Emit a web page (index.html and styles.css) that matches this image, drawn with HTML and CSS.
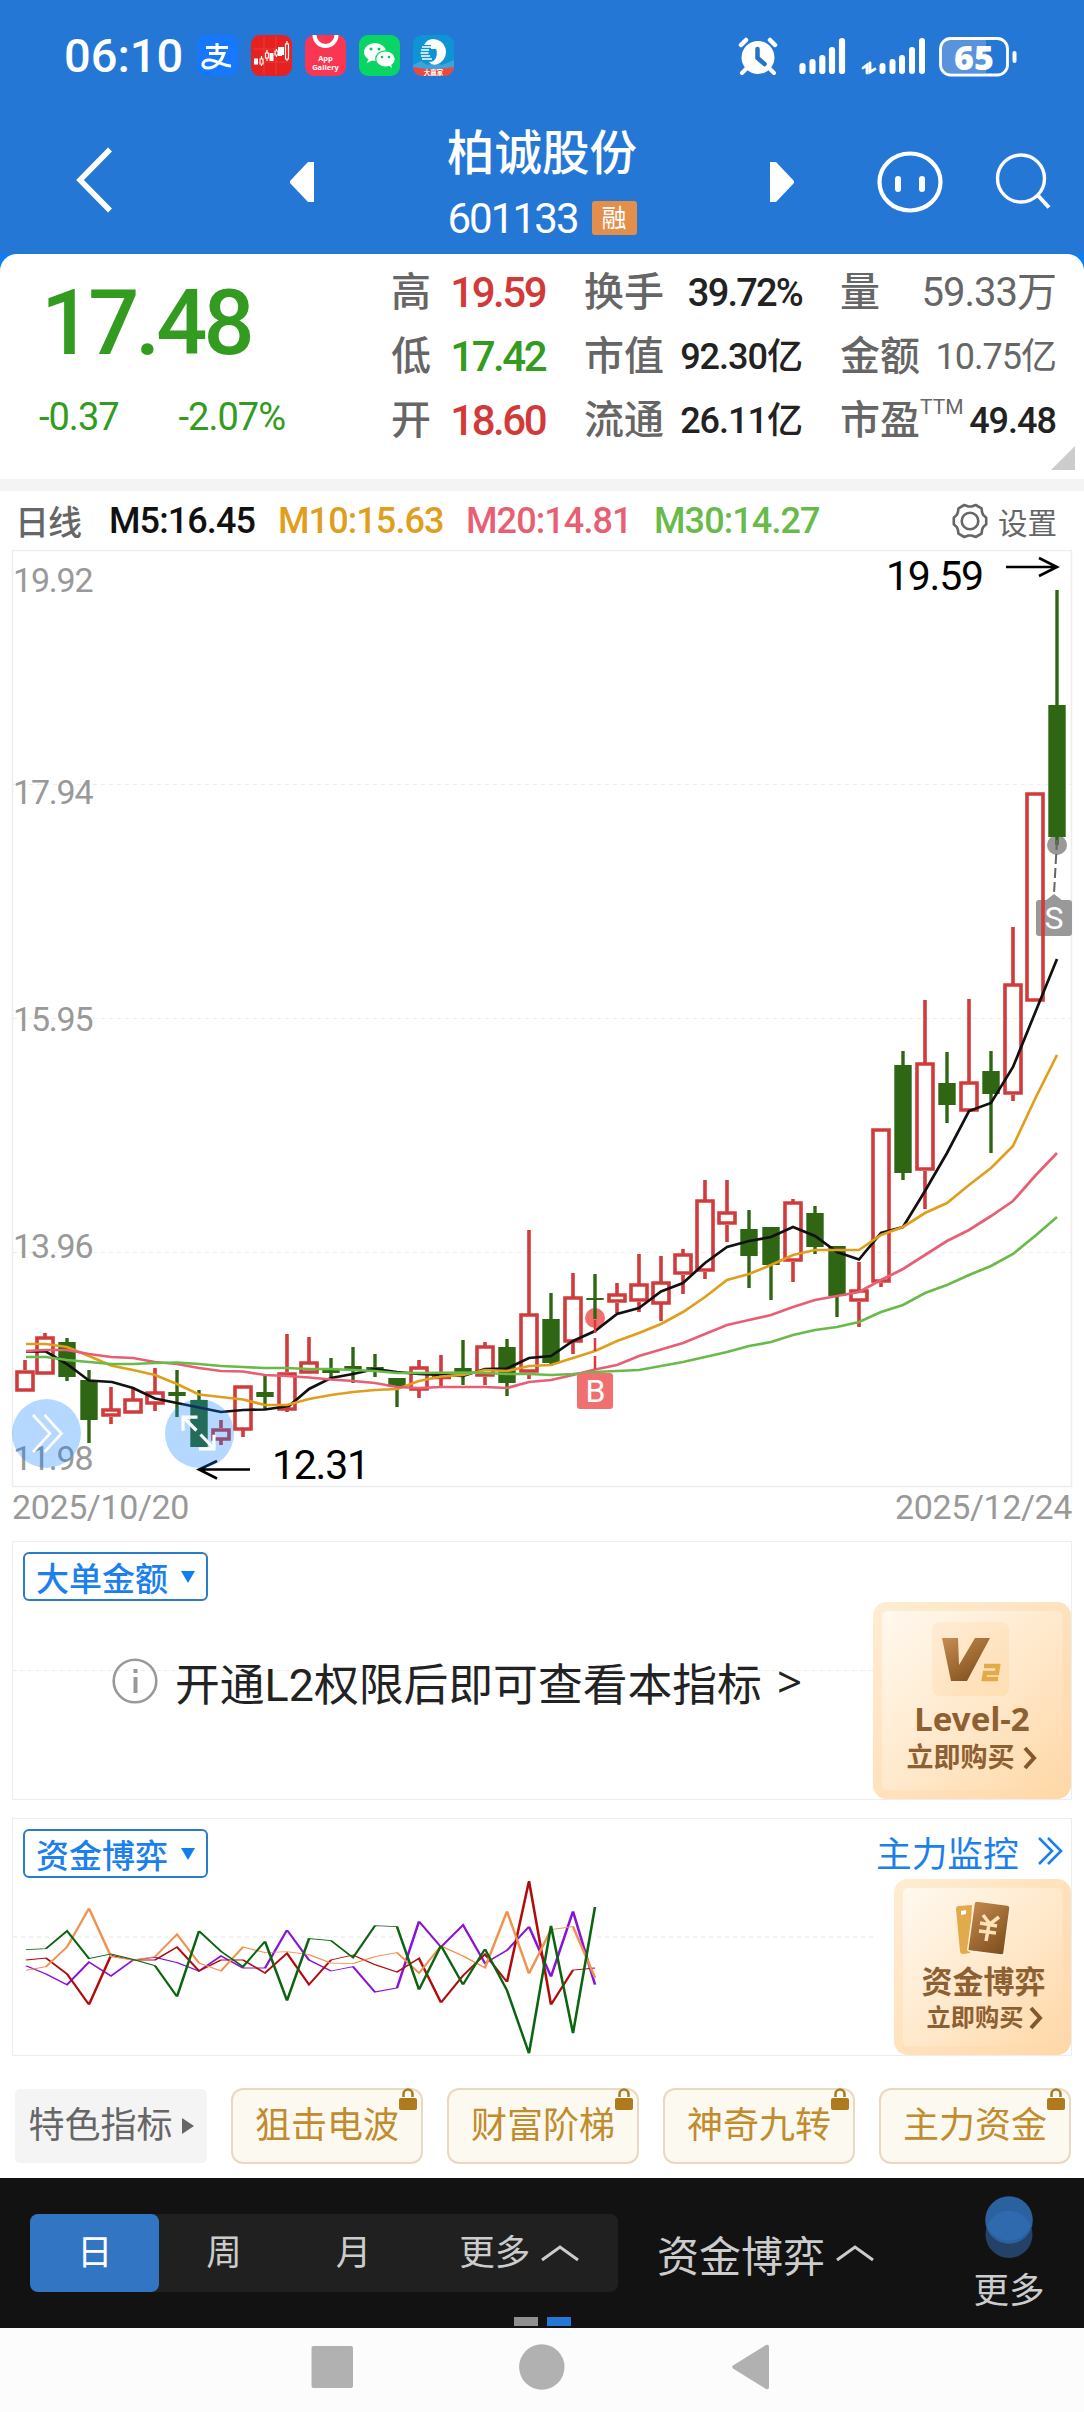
FILE: index.html
```html
<!DOCTYPE html>
<html lang="zh-CN">
<head>
<meta charset="utf-8">
<title>柏诚股份 601133</title>
<link rel="stylesheet" href="styles.css">
</head>
<body>
<header class="header">
  <div class="status">
    <span class="time">06:10</span>
    <div class="apps">
      <svg width="41" height="41" viewBox="0 0 41 41"><rect width="41" height="41" rx="9" fill="#1677ff"/><path d="M9 12.500h22M20 8v9M12 18.500h15C25 25 19 33 11 33c-8 0-6-9 2-8 8 1 14 6 21 6" fill="none" stroke="#fff" stroke-width="3"/></svg>
      <svg width="41" height="41" viewBox="0 0 41 41"><rect width="41" height="41" rx="9" fill="#e52221"/><path d="M13 1v39M25 1v39M2 14h37M2 27h37" stroke="#f04a42" stroke-width=".6"/><path d="M5 23.500v6M20.500 18v8M29 12v9M31 12v8" stroke="#fff" stroke-width="4"/><path d="M9 24h3v5h-3zM10.500 21v3m0 5v2M14.500 18h3v5h-3zM16 15v3m0 5v3M24 16h3v4h-3zM25.500 14v2m0 4v2M34.500 9h3v15h-3zM36 6v3m0 15v2" fill="none" stroke="#fff" stroke-width="1.200"/></svg>
      <svg width="41" height="41" viewBox="0 0 41 41"><rect width="41" height="41" rx="9" fill="#fb3653"/><path d="M9.500 0a11 11 0 0 0 22 0" fill="none" stroke="#fff" stroke-width="4"/><text class="app-word" x="20.500" y="26">App</text><text class="app-word" x="20.500" y="35">Gallery</text></svg>
      <svg width="41" height="41" viewBox="0 0 41 41"><rect width="41" height="41" rx="9" fill="#08d563"/><path d="M10 22l-2 6 6-3z" fill="#fff"/><ellipse cx="16" cy="17" rx="11" ry="9" fill="#fff"/><ellipse cx="26.500" cy="24" rx="9.800" ry="8.200" fill="#fff" stroke="#08d563" stroke-width="1.200"/><path d="M29 30l4 3-1-5z" fill="#fff"/><g fill="#08c45c"><circle cx="12" cy="14" r="1.500"/><circle cx="20" cy="14" r="1.500"/><circle cx="23" cy="22" r="1.300"/><circle cx="30" cy="22" r="1.300"/></g></svg>
      <svg width="41" height="41" viewBox="0 0 41 41"><defs><clipPath id="appclip"><rect width="41" height="41" rx="9"/></clipPath></defs><g clip-path="url(#appclip)"><path fill="#0e93d4" d="M0 0h41v41H0z"/><path d="M0 30l8-4 6 4 7-2 8 2 12-5v10H0z" fill="#3aa5dc"/><path d="M0 32q20 4 41 0v9H0z" fill="#e94a3d"/></g><path d="M20 4a13 13 0 0 1 7 24q-7 4-11-1c10 0 8-12 7-13h-5v-4h-7q3-6 9-6z" fill="#fff"/><path d="M9 12h10M8 15h8M7.500 18h8M8 21h9M9 24h10" stroke="#fff" stroke-width="1.500"/><text class="app-badge" x="20.500" y="39.500">大赢家</text></svg>
    </div>
    <svg class="status-icons" width="280" height="42" viewBox="738 35 280 42" fill="none" stroke="#fff" stroke-linecap="round">
      <circle cx="758" cy="57.500" r="16.500" fill="#fff" stroke="none"/><path d="M741 45l5-5M770 40l5 5" stroke-width="4.500"/><path d="M746 69l-4 4M770 69l4 4" stroke-width="4"/><path d="M757.500 49v9l7 6" stroke="#2472cb" stroke-width="4.500"/>
      <path d="M802.500 66v5M812.500 62v9M822.300 58v13M832 50v21M842 41v30" stroke-width="6.200"/>
      <path d="M882.500 66v5M892.500 62v9M902 58v13M912 50v21M922 41v30" stroke-width="6"/>
      <path d="M863 68l4-3v8M870 63v9l5-3" stroke-width="2.800"/>
      <path d="M948 40h38v33h-38q-7 0-7-8V48q0-8 7-8z" fill="#5993dc" stroke="none"/><rect x="940.500" y="38.500" width="67" height="36.500" rx="10" stroke-width="2.800"/><path d="M1014.500 53v8" stroke-width="4"/>
      <text class="battery" x="974" y="69.500">65</text>
    </svg>
  </div>
  <div class="titlebar">
    <svg class="back" width="37" height="66" viewBox="0 0 37 66"><path d="M34 2.500L4 33l30 30.500" fill="none" stroke="#fff" stroke-width="5.500"/></svg>
    <svg class="step" width="24" height="40"><path d="M24 0v40h-6L0 21v-2L18 0z" fill="#fff"/></svg>
    <div class="title">
      <h1>柏诚股份</h1>
      <p><span class="code">601133</span><span class="tag">融</span></p>
    </div>
    <svg class="step" width="24" height="40"><path d="M0 0v40h6l18-19v-2L6 0z" fill="#fff"/></svg>
    <svg class="face" width="66" height="62" viewBox="0 0 66 62"><ellipse cx="33" cy="31" rx="30.500" ry="28.500" fill="none" stroke="#fff" stroke-width="4.200"/><path d="M21 28v10M45 28v10" stroke="#fff" stroke-width="6" stroke-linecap="round"/></svg>
    <svg class="search" width="56" height="58" viewBox="0 0 56 58"><circle cx="26" cy="26.500" r="23.500" fill="none" stroke="#fff" stroke-width="3.400"/><path d="M42.500 43L54 55.500" stroke="#fff" stroke-width="4"/></svg>
  </div>
</header>

<section class="quote-wrap">
  <div class="quote">
    <div class="price">
      <div class="last">17.48</div>
      <div class="delta"><span>-0.37</span><span>-2.07%</span></div>
    </div>
    <dl class="col c1">
      <dt>高</dt><dd class="up">19.59</dd>
      <dt>低</dt><dd class="down">17.42</dd>
      <dt>开</dt><dd class="up">18.60</dd>
    </dl>
    <dl class="col c2">
      <dt>换手</dt><dd class="pct">39.72%</dd>
      <dt>市值</dt><dd>92.30亿</dd>
      <dt>流通</dt><dd>26.11亿</dd>
    </dl>
    <dl class="col c3">
      <dt>量</dt><dd class="muted big">59.33万</dd>
      <dt>金额</dt><dd class="muted">10.75亿</dd>
      <dt>市盈<sup>TTM</sup></dt><dd>49.48</dd>
    </dl>
    <svg class="corner" width="24" height="24"><path d="M24 0v24H0z" fill="#ccc"/></svg>
  </div>
</section>

<div class="legend">
  <span class="period">日线</span>
  <span class="m5">M5:16.45</span><span class="m10">M10:15.63</span><span class="m20">M20:14.81</span><span class="m30">M30:14.27</span>
  <span class="settings"><svg width="36" height="36" viewBox="-18 -18 36 36" fill="none" stroke="#666" stroke-width="2.600" stroke-linejoin="round"><path d="M16.200-3.300V3.300L13.200 6.100 12.100 8.800 11.500 12.700 5.700 16 1.600 14.500H-1.600L-5.700 16-11.500 12.700-12.100 8.800-13.200 6.100-16.200 3.300V-3.300L-13.200-6.100-12.100-8.800-11.500-12.700-5.700-16-1.600-14.500H1.600L5.700-16 11.500-12.700 12.100-8.800 13.200-6.100z"/><circle r="8.300"/></svg>设置</span>
</div>

<svg class="kline" width="1084" height="938" viewBox="0 550 1084 938">
  <rect class="frame" x="12.500" y="550.500" width="1059" height="936"/>
  <path class="grid" d="M13 784.500H1071M13 1018.500H1071M13 1252.500H1071"/>
  <g class="axis"><text x="13" y="592">19.92</text><text x="13" y="804">17.94</text><text x="13" y="1031">15.95</text><text x="13" y="1258">13.96</text><text x="13" y="1470">11.98</text></g>
  <rect x="1036" y="900" width="36" height="36" rx="3" fill="#999"/><path d="M1045 901l9-7 9 7z" fill="#999"/>
  <circle cx="1057" cy="845" r="10" fill="#999"/><circle cx="595" cy="1318" r="10" fill="#f07070"/>
  <path class="wick green" d="M67 1338v43M89 1370v73M177 1370v47M199 1390v57M265 1376v33M331 1358v20M353 1347v36M375 1354v23M397 1378v29M463 1340v45M507 1339v57M551 1293v73M595 1274v45M749 1210v78M771 1227v73M815 1206v48M837 1246v71M903 1051v129M947 1052v71M991 1051v102M1057 590v255"/>
  <path class="body green" d="M67 1342v35M89 1380v40M177 1392v4M199 1400v47M265 1392v5M331 1370v3M353 1366v4M375 1367v3M397 1378v9M463 1368v5M507 1347v36M551 1319v44M595 1298v2M749 1229v27M771 1227v38M815 1213v34M837 1246v50M903 1065v108M947 1083v22M991 1071v23M1057 705v132"/>
  <path class="red" d="M25 1360v10M45 1333v4M111 1387v22M111 1417v7M133 1387v12M155 1368v24M155 1404v7M221 1420v8M221 1440v5M243 1430v7M287 1334v38M287 1410v2M309 1337v25M419 1360v7M419 1390v8M441 1355v32M485 1342v4M485 1377v8M529 1230v84M529 1373v6M573 1273v24M573 1342v12M617 1283v11M617 1303v10M639 1254v30M639 1302v10M661 1256v26M661 1304v17M683 1249v5M683 1275v19M705 1180v20M705 1272v7M727 1180v32M727 1225v17M793 1199v3M793 1262v20M859 1262v28M859 1302v25M881 1283v4M925 1000v63M925 1171v38M969 999v83M1013 927v57M1013 1095v6"/>
  <path class="red" d="M17 1372h16v18h-16zM37 1338h16v35h-16zM103 1410h16v5h-16zM125 1400h16v12h-16zM147 1393h16v10h-16zM213 1430h16v9h-16zM235 1387h16v42h-16zM279 1374h16v35h-16zM301 1363h16v9h-16zM411 1368h16v21h-16zM432 1377.500h19M477 1347h16v28h-16zM521 1315h16v56h-16zM565 1298h16v43h-16zM609 1295h16v6h-16zM631 1285h16v15h-16zM653 1283h16v20h-16zM675 1255h16v18h-16zM697 1201h16v69h-16zM719 1213h16v10h-16zM785 1203h16v57h-16zM851 1291h16v9h-16zM873 1130h16v151h-16zM917 1064h16v105h-16zM961 1083h16v27h-16zM1005 985h16v108h-16zM1027 794h16v206h-16z"/>
  <polyline class="ma" stroke="#111" points="26,1351.500 46,1351.500 67,1364 89,1380.500 112,1382 133,1388 155,1398.500 177,1403 199,1407.500 221,1412 243,1410 265,1409.500 289,1406 309,1389 331,1378 353,1374 375,1369 397,1372 419,1374 441,1375 463,1376 485,1369 507,1368.500 529,1358 551,1356 573,1341 595,1331 617,1314 639,1308 661,1291.500 683,1283 705,1263 727,1247 749,1241 771,1237 793,1227 815,1236 837,1252 859,1259.500 881,1233 903,1227 925,1191 947,1153 969,1111 991,1103 1013,1067 1035,1013 1057,959"/>
  <polyline class="ma" stroke="#df9f1c" points="26,1344 46,1344 67,1347 89,1356 111,1365.500 133,1370 155,1375 177,1384 199,1394.500 221,1397 243,1399.500 265,1405 287,1405 309,1399 331,1395 353,1392 375,1390 397,1389 419,1381 441,1376.500 463,1375 485,1370 507,1371 529,1366 551,1365 573,1358 595,1351 617,1341 639,1333 661,1324 683,1312 705,1297 727,1280 749,1274 771,1265 793,1255 815,1250 859,1250 881,1235 903,1227 925,1213 947,1203 969,1185 991,1168 1013,1146 1035,1099 1057,1055"/>
  <polyline class="ma" stroke="#e85f74" points="26,1351 46,1350 67,1350 89,1354 111,1357 133,1358 155,1362 177,1364 199,1368 221,1371 243,1371.500 265,1375 287,1376 309,1377.500 331,1379.500 353,1381 375,1383 397,1387 419,1388 441,1387 485,1387 507,1388 529,1382 551,1380 573,1375 595,1369.500 617,1365 639,1356 661,1349.500 683,1343 705,1334 727,1325 749,1320 771,1315 793,1307 815,1300 837,1296 859,1292 881,1280 903,1269 925,1255 947,1241 969,1230 991,1216 1013,1201 1035,1176 1057,1153"/>
  <polyline class="ma" stroke="#68bb48" points="26,1357 46,1357 67,1360 89,1362 111,1364 133,1364 155,1363 177,1362.500 199,1364 221,1366 243,1367 265,1368 287,1368 309,1369 331,1369 353,1370 375,1371 397,1373 419,1373 463,1372.500 485,1373 507,1374 529,1374 551,1375 573,1374 595,1372 617,1371 639,1370 661,1366 683,1362 705,1357 727,1352 749,1346 771,1342 793,1335 815,1330 837,1327 859,1322 881,1312 903,1305 925,1293 947,1285 969,1275 991,1266 1013,1254 1035,1236 1057,1217"/>
  <path d="M595 1320v50" stroke="#d8393a" stroke-width="2.500" stroke-dasharray="13 5"/>
  <path d="M1057 840l-3 54" stroke="#666" stroke-width="2" stroke-dasharray="10 4"/>
  <rect x="577" y="1373" width="36" height="36" rx="3" fill="#f07070"/>
  <text class="mark" x="595.500" y="1402">B</text><text class="mark" x="1054" y="929">S</text>
  <g fill="none" stroke="#000" stroke-width="2.600"><path d="M1006 567h51M1039 558l18 9-18 9M250 1469.500h-51M217 1461l-18 8.500 18 9"/></g>
  <text class="peak" x="886" y="590" textLength="98">19.59</text><text class="peak" x="272" y="1479" textLength="98">12.31</text>
  <g fill="#087dff" fill-opacity=".3"><circle cx="46.500" cy="1433.500" r="34.500"/><circle cx="199.500" cy="1433.500" r="34.500"/></g>
  <g fill="none" stroke="#fff" stroke-width="2.600"><path d="M33 1415l17 18.500-17 18.500M44.500 1415l17 18.500-17 18.500"/><path d="M197.500 1417.200h-14.500v13.500M183 1417l13.500 13.500M199 1448.800h15v-14M200.500 1434.500l13.500 14" stroke-width="3.200"/></g>
</svg>
<div class="dates"><span>2025/10/20</span><span>2025/12/24</span></div>

<section class="panel big-order">
  <div class="main">
    <button class="select">大单金额<i></i></button>
    <p class="notice"><svg width="46" height="46" viewBox="0 0 46 46" fill="none" stroke="#999" stroke-width="2.600"><circle cx="23" cy="23" r="21.300"/><path d="M23.500 11v4M23.500 19v16" stroke-width="4"/></svg><span>开通L2权限后即可查看本指标</span><b>&gt;</b></p>
  </div>
  <aside class="vip">
    <svg class="tile" width="78" height="74" viewBox="933 1623 78 74"><defs><linearGradient id="bronze" x2=".7" y2="1"><stop stop-color="#c88d50"/><stop offset="1" stop-color="#81501f"/></linearGradient><linearGradient id="peach" x2="1" y2="1"><stop stop-color="#ffecd6"/><stop offset="1" stop-color="#ffdeb2"/></linearGradient></defs><rect x="933" y="1623" width="77" height="74" rx="8" fill="url(#peach)"/><path d="M943 1639h16l1 27 16-27h15l-23 43h-16z" fill="url(#bronze)"/><path d="M985 1667h14l-1 7h-12l-1 6h14" fill="none" stroke="#e2ab48" stroke-width="4.500"/></svg>
    <strong>Level-2</strong>
    <em>立即购买<svg width="15" height="24" viewBox="0 0 15 24"><path d="M2 2l9 10-9 10" fill="none" stroke="#85572c" stroke-width="4"/></svg></em>
  </aside>
</section>

<section class="panel flow">
  <div class="main">
    <button class="select">资金博弈<i></i></button>
    <svg class="flow-chart" width="860" height="178" viewBox="13 1878 860 178" fill="none">
      <g transform="translate(0 1810) scale(1 .33333)" stroke-width="2.600">
        <polyline stroke="#8a12d8" points="26,467 46,492 67,524 89,456 111,498 133,450 155,442 177,458 199,483 221,438 243,474 265,474 287,360 309,450 331,483 353,470 375,546 397,534 419,334 441,411 463,345 485,460 507,421 529,350 551,500 573,304 595,524"/>
        <polyline stroke="#b00c0c" points="26,450 46,444 67,492 89,584 111,436 133,450 155,450 177,411 199,483 221,450 243,450 265,489 287,430 309,524 331,450 353,435 375,464 397,486 419,445 441,578 463,497 485,433 507,516 529,213 551,584 573,480 595,474"/>
        <polyline stroke="#f09350" points="26,481 46,470 67,411 89,295 111,440 133,450 155,440 177,373 199,459 221,483 243,411 265,428 287,425 309,434 331,459 353,461 375,440 397,428 419,489 441,408 463,438 485,473 507,304 529,491 551,359 573,350 595,503"/>
        <polyline stroke="#0b6410" points="26,419 46,416 67,363 89,446 111,432 133,448 155,467 177,560 199,363 221,424 243,470 265,394 287,572 309,386 331,392 353,443 375,347 397,350 419,539 441,407 463,524 485,417 507,541 529,730 551,347 573,670 595,291"/>
      </g>
    </svg>
  </div>
  <div class="side">
    <a class="monitor">主力监控<svg width="26" height="30" viewBox="0 0 26 30" fill="none" stroke="#1b80ee" stroke-width="2.600"><path d="M2 2l13 13L2 28M11 2l13 13-13 13"/></svg></a>
    <aside class="vip small">
      <svg class="cards" width="54" height="55" viewBox="0 0 54 55"><path d="M0 8q0-3 3-3l13-1-2 48-7 1q-3 0-3-3z" fill="#e3aa4b"/><path d="M5 10l5-1v4l-5 1z" fill="#fff"/><path d="M21 0l30 4q3 0 3 3l-6 45q0 2-3 2l-31-4q-3 0-2-3l6-44q0-3 3-3z" fill="url(#bronze)" stroke="#ffefd9" stroke-width="1.500"/><path d="M27 14l7 9 9-7M24 22l17 3M23 30l17 2M33 23l-3 17" fill="none" stroke="#ffe2b6" stroke-width="3.500"/></svg>
      <strong>资金博弈</strong>
      <em>立即购买<svg width="15" height="24" viewBox="0 0 15 24"><path d="M2 2l9 10-9 10" fill="none" stroke="#85572c" stroke-width="4"/></svg></em>
    </aside>
  </div>
</section>

<nav class="features">
  <span class="all">特色指标<i></i></span>
  <a>狙击电波<svg class="lock" viewBox="0 0 18 22"><path d="M4.500 9V6a4.500 4.500 0 0 1 9 0v3" fill="none" stroke="#a87b2c" stroke-width="2.600"/><rect y="10" width="18" height="12" rx="2" fill="#af7a1e"/></svg></a>
  <a>财富阶梯<svg class="lock" viewBox="0 0 18 22"><path d="M4.500 9V6a4.500 4.500 0 0 1 9 0v3" fill="none" stroke="#a87b2c" stroke-width="2.600"/><rect y="10" width="18" height="12" rx="2" fill="#af7a1e"/></svg></a>
  <a>神奇九转<svg class="lock" viewBox="0 0 18 22"><path d="M4.500 9V6a4.500 4.500 0 0 1 9 0v3" fill="none" stroke="#a87b2c" stroke-width="2.600"/><rect y="10" width="18" height="12" rx="2" fill="#af7a1e"/></svg></a>
  <a>主力资金<svg class="lock" viewBox="0 0 18 22"><path d="M4.500 9V6a4.500 4.500 0 0 1 9 0v3" fill="none" stroke="#a87b2c" stroke-width="2.600"/><rect y="10" width="18" height="12" rx="2" fill="#af7a1e"/></svg></a>
</nav>

<footer class="toolbar">
  <div class="tools">
    <div class="periods">
      <span class="on">日</span><span>周</span><span>月</span>
      <span class="more">更多<svg width="40" height="18" viewBox="0 0 40 18"><path d="M2 16L20 3l18 13" fill="none" stroke="#ccc" stroke-width="3"/></svg></span>
    </div>
    <span class="fund">资金博弈<svg width="40" height="18" viewBox="0 0 40 18"><path d="M2 16L20 3l18 13" fill="none" stroke="#ccc" stroke-width="3"/></svg></span>
    <div class="extra"><svg width="50" height="66" viewBox="0 0 50 66"><circle cx="25" cy="39.500" r="23.500" fill="#244267"/><circle cx="25" cy="25" r="23.800" fill="#2c619f"/><path d="M3 31a23.500 23.500 0 0 1 44 0 23.800 23.800 0 0 1-44 0z" fill="#2f69ae"/></svg><span>更多</span></div>
  </div>
  <div class="pager"><i></i><i class="on"></i></div>
</footer>
<div class="sysnav">
  <svg width="1084" height="84" viewBox="0 2328 1084 84" fill="#b1b1b1"><rect x="311.500" y="2346" width="41.500" height="42" rx="2"/><circle cx="541.800" cy="2367" r="22.700"/><path d="M733 2365.500L766 2345q3-1 3 2v40q0 3-3 2L733 2368.500q-1.500-1.500 0-3z"/></svg>
</div>
</body>
</html>
```

FILE: styles.css
```css
* { box-sizing: border-box; margin: 0; padding: 0; }
body { width: 1084px; background: #fff; font-family: Roboto, "Noto Sans CJK SC", sans-serif; color: #222; overflow-x: hidden; }
svg { display: block; flex: none; }
i, em { font-style: normal; }
button { font: inherit; background: none; }

.header { height: 254px; background: #2577d5; color: #fff; }
.status { display: flex; align-items: flex-start; height: 115px; padding-left: 64px; }
.time { width: 133px; padding-top: 29px; font-size: 47px; line-height: 54px; font-weight: 500; }
.apps { display: flex; gap: 13px; padding-top: 35px; }
.status-icons { margin: 35px 0 0 284px; }
.app-word { font: 700 7.500px "Open Sans", sans-serif; fill: #fff; text-anchor: middle; }
.app-badge { font: 700 6.500px "Noto Sans CJK SC", sans-serif; fill: #fff; text-anchor: middle; }
.battery { font: 800 34px "Open Sans", sans-serif; fill: #fff; stroke: none; text-anchor: middle; }
.titlebar { display: grid; grid-template-columns: 290px 24px 456px 24px 83px 1fr; height: 139px; align-items: start; }
.back { margin: 32px 0 0 76px; }
.step { margin-top: 47px; }
.title { text-align: center; }
.title h1 { padding-top: 5px; font-size: 47.500px; line-height: 68px; font-weight: 500; }
.title p { display: flex; justify-content: center; align-items: center; gap: 14px; height: 60px; }
.code { font-size: 42px; letter-spacing: -1.900px; }
.tag { width: 45px; height: 34px; background: #e38f4b; border-radius: 3px; font-size: 25px; line-height: 35px; }
.titlebar { grid-template-columns: 290px 24px 456px 24px 83px 118px 1fr; }
.face { margin: 36px 0 0 83px; }
.face { margin-left: 83px; justify-self: start; }
.search { margin: 37px 0 0 118px; }

.quote-wrap { background: #0b7ff5; }
.quote { position: relative; display: grid; grid-template-columns: 391px 193px 256px 216px; height: 225px; background: #fff; border-radius: 17px 17px 0 0; }
.price { padding: 22px 0 0 39px; color: #329b20; }
.last { font-size: 90px; line-height: 96px; font-weight: 500; letter-spacing: -4px; padding-left: 2px; }
.delta { display: flex; gap: 60px; margin-top: 22px; font-size: 38px; line-height: 46px; letter-spacing: -1px; }
.col { display: grid; align-content: start; grid-auto-rows: 64px; line-height: 64px; padding-top: 7px; font-size: 36px; font-weight: 500; }
.col dt { color: #666; font-size: 40px; white-space: nowrap; }
.col dd { text-align: right; letter-spacing: -1px; }
.c1 { grid-template-columns: 59px 95px; }
.c1 dd { font-size: 42px; letter-spacing: -2.500px; white-space: nowrap; }
.c2 { grid-template-columns: 90px 128px; }
.c3 { grid-template-columns: 70px 146px; }
.c3 dd { white-space: nowrap; }
.col .pct { font-size: 38px; letter-spacing: -1.800px; }
.col .muted { color: #666; font-weight: 400; }
.col .big { font-size: 40px; }
.up { color: #d23a3a; }
.down { color: #329b20; }
sup { font-size: 21px; font-weight: 400; line-height: 0; vertical-align: 20px; }
.corner { position: absolute; right: 9px; bottom: 9px; }

.legend { display: flex; align-items: center; height: 71px; border-top: 12px solid #f4f4f4; font-size: 36px; font-weight: 500; letter-spacing: -.900px; padding-left: 15px; }
.period { width: 94px; font-size: 34px; color: #666; }
.m5 { width: 169px; color: #111; }
.m10 { width: 188px; color: #df9f1c; }
.m20 { width: 188px; color: #e85f74; }
.m30 { color: #68bb48; }
.settings { display: flex; align-items: center; gap: 10px; margin: 0 27px 0 auto; font-size: 29.500px; font-weight: 400; letter-spacing: 0; color: #666; }

.frame { fill: none; stroke: #ededed; stroke-width: 1.500; }
.grid { stroke: #ececec; stroke-dasharray: 4 4; }
.axis { font-size: 34px; fill: #999; letter-spacing: -1.200px; }
.wick { stroke-width: 3.400; }
.body { stroke-width: 17.400; }
.green { stroke: #2f6613; fill: none; }
.red { stroke: #d23b3b; stroke-width: 3.600; fill: none; }
.ma { fill: none; stroke-width: 2.700; }
.mark { font-size: 32px; fill: #fff; text-anchor: middle; }
.peak { font-size: 41px; fill: #000; }
.dates { display: flex; justify-content: space-between; height: 53px; padding: 0 12px; font-size: 34px; line-height: 38px; color: #999; letter-spacing: -.400px; }

.panel { display: flex; width: 1060px; margin-left: 12px; border: 1.500px solid #ededed; }
.main { flex: 1; }
.select { display: flex; align-items: center; width: 185px; height: 49px; margin: 10px 0 0 10px; padding-left: 11px; border: 2px solid #2b7bcb; border-radius: 6px; color: #1b80ee; font-size: 33px; font-weight: 500; }
.select i { margin-left: 13px; border: 7px solid transparent; border-top: 12px solid #0f7ff0; border-bottom: 0; }
.big-order { height: 259px; }
.big-order .main { background: repeating-linear-gradient(90deg, #ececec 0 4px, transparent 4px 8px) 0 128px / 100% 1px no-repeat; }
.notice { display: flex; align-items: center; height: 60px; margin: 50px 0 0 99px; font-size: 44.800px; white-space: nowrap; }
.notice span { margin-left: 17px; width: 589px; }
.notice b { margin-left: 13px; font: 400 44px "Open Sans", sans-serif; }
.vip { display: flex; flex-direction: column; align-items: center; align-self: flex-end; width: 198px; height: 197px; padding-top: 11px; border: 9px solid #ffdfb7; border-radius: 14px; background: linear-gradient(135deg, #fff9ef, #ffe6c6 60%, #ffd8a7) padding-box, linear-gradient(135deg, #ffedd3, #ffd7a8) border-box; border-color: transparent; color: #8e6031; }
.vip strong { font: 700 33px/46px "Noto Sans", "Noto Sans CJK SC", sans-serif; }
.vip em { display: flex; align-items: center; gap: 8px; font-size: 27px; font-weight: 700; line-height: 32px; }
.tile { margin-left: -3px; }
.flow { height: 238px; margin-top: 18px; }
.flow .main { background: repeating-linear-gradient(90deg, #f2f2f2 0 4px, transparent 4px 8px) 0 117px / 100% 2px no-repeat; }
.flow-chart { margin: 0; overflow: visible; }
.side { display: flex; flex-direction: column; justify-content: space-between; align-items: flex-end; width: 198px; }
.monitor { display: flex; align-items: center; gap: 18px; align-self: flex-start; padding-left: 3px; height: 60px; padding-top: 4px; font-size: 35.700px; color: #1b80ee; white-space: nowrap; }
.small { width: 177px; height: 176px; padding-top: 13px; }
.small strong { font-size: 31px; line-height: 50px; padding-left: 2px; }
.small em { font-size: 24.200px; line-height: 24px; gap: 6px; padding-left: 6px; }

.features { display: grid; grid-template-columns: repeat(5, 192px); column-gap: 24px; height: 122px; padding: 32px 0 0 15px; font-size: 36px; line-height: 73px; text-align: center; }
.features a { position: relative; height: 76px; border: 2px solid #e8d9c0; border-radius: 12px; background: #fcf9f1; color: #c18b2e; }
.features .all { display: flex; align-items: center; justify-content: center; gap: 9px; height: 74px; margin-top: 1px; background: #f4f4f4; border-radius: 5px; color: #666; }
.all i { border: 8px solid transparent; border-left: 12px solid #666; border-right: 0; }
.lock { position: absolute; right: 4px; top: -2px; width: 18px; height: 22px; }

.toolbar { height: 150px; background: #121212; color: #ccc; }
.tools { display: flex; height: 139px; padding-left: 30px; }
.periods { display: flex; width: 588px; height: 78px; margin-top: 36px; background: #202020; border-radius: 8px; font-size: 35.500px; line-height: 78px; text-align: center; }
.periods span { width: 129.500px; }
.periods .on { background: #3175c3; color: #fff; border-radius: 8px; }
.periods .more { display: flex; align-items: center; gap: 10px; width: 200px; padding-left: 41px; }
.fund { display: flex; align-items: center; gap: 10px; height: 78px; margin: 36px 0 0 39px; font-size: 42px; }
.extra { display: flex; flex-direction: column; align-items: center; width: 72px; margin: 17px 0 0 98px; font-size: 35.500px; line-height: 60px; }
.pager { display: flex; justify-content: center; gap: 9px; }
.pager i { width: 24px; height: 9px; background: #909090; }
.pager .on { background: #2577d5; }
.sysnav { height: 84px; background: #fcfcfc; }
```
